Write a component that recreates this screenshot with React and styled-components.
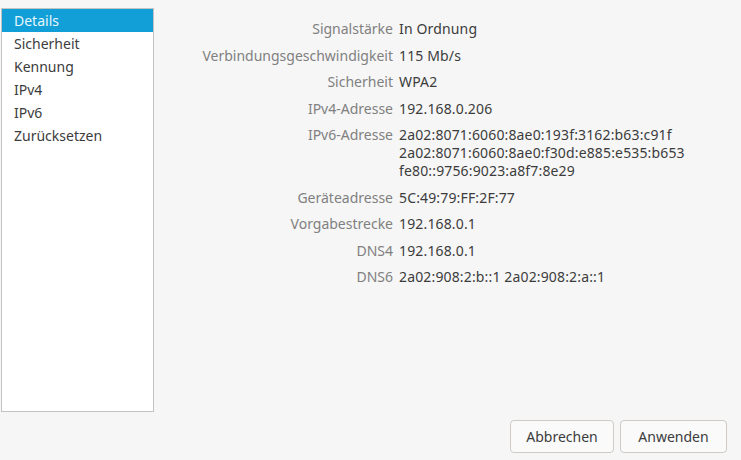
import React from "react";
import styled, { createGlobalStyle } from "styled-components";

const GlobalStyle = createGlobalStyle`
  html, body {
    margin: 0;
    padding: 0;
    background: #f6f6f6;
  }
  body {
    font-family: "Noto Sans", "Open Sans", sans-serif;
    font-size: 14px;
  }
`;

const Page = styled.div`
  width: 741px;
  height: 460px;
  display: flex;
  flex-direction: column;
  background: #f6f6f6;
  overflow: hidden;
`;

const Body = styled.div`
  display: flex;
  height: 412px;
`;

const Sidebar = styled.ul`
  list-style: none;
  margin: 8px 0 0 1px;
  padding: 0;
  width: 151px;
  height: 402px;
  background: #ffffff;
  border: 1px solid #c3c3c3;
`;

const NavItem = styled.li`
  height: 23px;
  line-height: 23px;
  padding-left: 12px;
  color: ${(p) => (p.$active ? "#e6f6fd" : "#3c3c3c")};
  background: ${(p) => (p.$active ? "#129fd8" : "transparent")};
`;

const Details = styled.div`
  display: grid;
  grid-template-columns: 239px auto;
  column-gap: 6px;
  row-gap: 8.5px;
  align-content: start;
  padding-top: 20px;
  line-height: 18px;
`;

const Label = styled.div`
  text-align: right;
  color: #808080;
  white-space: nowrap;
`;

const Value = styled.div`
  color: #3c3c3c;
  white-space: nowrap;
  letter-spacing: 0.15px;
`;

const Footer = styled.div`
  display: flex;
  justify-content: flex-end;
  gap: 6px;
  padding: 8px 14px 0 0;
`;

const Button = styled.button`
  width: ${(p) => p.$width}px;
  height: 33px;
  font-family: inherit;
  font-size: 14px;
  color: #3c3c3c;
  background: #fafafa;
  border: 1px solid #cfcac5;
  border-radius: 4px;
  padding: 0;
`;

const nav = ["Details", "Sicherheit", "Kennung", "IPv4", "IPv6", "Zurücksetzen"];

const rows = [
  ["Signalstärke", ["In Ordnung"]],
  ["Verbindungsgeschwindigkeit", ["115 Mb/s"]],
  ["Sicherheit", ["WPA2"]],
  ["IPv4-Adresse", ["192.168.0.206"]],
  [
    "IPv6-Adresse",
    [
      "2a02:8071:6060:8ae0:193f:3162:b63:c91f",
      "2a02:8071:6060:8ae0:f30d:e885:e535:b653",
      "fe80::9756:9023:a8f7:8e29",
    ],
  ],
  ["Geräteadresse", ["5C:49:79:FF:2F:77"]],
  ["Vorgabestrecke", ["192.168.0.1"]],
  ["DNS4", ["192.168.0.1"]],
  ["DNS6", ["2a02:908:2:b::1 2a02:908:2:a::1"]],
];

const App = () => {
  return (
    <Page>
      <GlobalStyle />
      <Body>
        <Sidebar>
          {nav.map((item, i) => (
            <NavItem key={item} $active={i === 0}>
              {item}
            </NavItem>
          ))}
        </Sidebar>
        <Details>
          {rows.map(([label, values]) => (
            <React.Fragment key={label}>
              <Label>{label}</Label>
              <Value>
                {values.map((v) => (
                  <div key={v}>{v}</div>
                ))}
              </Value>
            </React.Fragment>
          ))}
        </Details>
      </Body>
      <Footer>
        <Button $width={104}>Abbrechen</Button>
        <Button $width={107}>Anwenden</Button>
      </Footer>
    </Page>
  );
};

export default App;
